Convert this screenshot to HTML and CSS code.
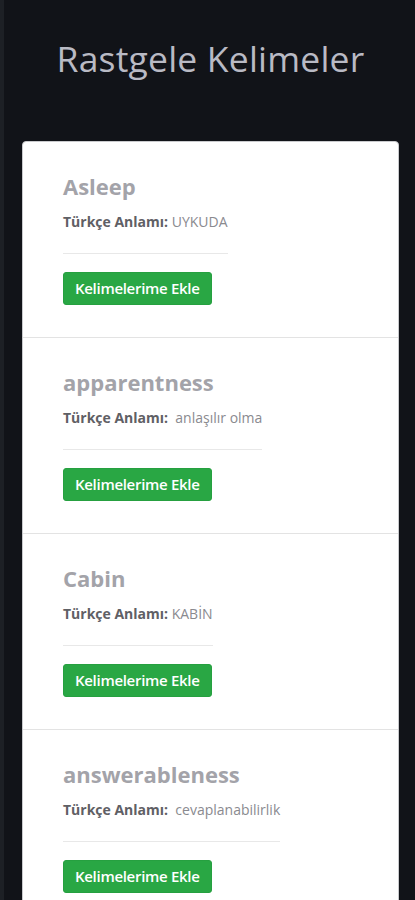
FILE: index.html
```html
<!DOCTYPE html>
<html lang="tr">
<head>
    <meta charset="UTF-8">
    <title>Rastgele Kelimeler</title>
    <link rel="stylesheet" href="styles.css">
</head>
<body>
    <div class="page">
        <h1 class="page-title">Rastgele Kelimeler</h1>
        <div class="word-list">
            <div class="word-item">
                <div class="word-body">
                    <h5 class="word-title">Asleep</h5>
                    <p class="word-meaning"><b>Türkçe Anlamı:</b> UYKUDA</p>
                    <hr>
                    <button class="add-button">Kelimelerime Ekle</button>
                </div>
            </div>
            <div class="word-item">
                <div class="word-body">
                    <h5 class="word-title">apparentness</h5>
                    <p class="word-meaning"><b>Türkçe Anlamı:</b>&nbsp; anlaşılır olma</p>
                    <hr>
                    <button class="add-button">Kelimelerime Ekle</button>
                </div>
            </div>
            <div class="word-item">
                <div class="word-body">
                    <h5 class="word-title">Cabin</h5>
                    <p class="word-meaning"><b>Türkçe Anlamı:</b> KABİN</p>
                    <hr>
                    <button class="add-button">Kelimelerime Ekle</button>
                </div>
            </div>
            <div class="word-item">
                <div class="word-body">
                    <h5 class="word-title">answerableness</h5>
                    <p class="word-meaning"><b>Türkçe Anlamı:</b>&nbsp; cevaplanabilirlik</p>
                    <hr>
                    <button class="add-button">Kelimelerime Ekle</button>
                </div>
            </div>
        </div>
    </div>
</body>
</html>
```

FILE: styles.css
```css
html, body {
    margin: 0;
    height: 100%;
}
body {
    background-color: #111318;
    font-family: 'Open Sans', 'Liberation Sans', sans-serif;
    border-left: 4px solid #1d2025;
    overflow: hidden;
}
.page {
    padding: 0 16px 0 18px;
}
.page-title {
    margin: 0;
    padding: 34px 0 59px;
    text-align: center;
    font-size: 35.5px;
    font-weight: 400;
    line-height: 48px;
    color: #b9bac4;
    letter-spacing: 0.2px;
}
.word-list {
    background-color: white;
    border: 1px solid #c9cacd;
    border-radius: 4px;
}
.word-item {
    padding: 30px 40px 32px;
    border-bottom: 1px solid #e3e3e3;
}
.word-body {
    display: inline-block;
}
.word-title {
    margin: 0 0 12px;
    font-size: 22px;
    font-weight: 700;
    line-height: 28px;
    color: #a3a3a9;
}
.word-meaning {
    margin: 0;
    font-size: 14px;
    line-height: 20px;
    color: #8a8a8f;
}
.word-meaning b {
    color: #5f6065;
    font-weight: 700;
}
hr {
    margin: 21px 0 18px;
    border: 0;
    border-top: 1px solid #e8e8e8;
}
.add-button {
    display: block;
    padding: 5px 11px;
    font-family: 'Open Sans', 'Liberation Sans', sans-serif;
    font-size: 15px;
    font-weight: 600;
    line-height: 21px;
    letter-spacing: -0.3px;
    color: white;
    background-color: #29a744;
    border: 1px solid #26a040;
    border-radius: 3px;
}
```
